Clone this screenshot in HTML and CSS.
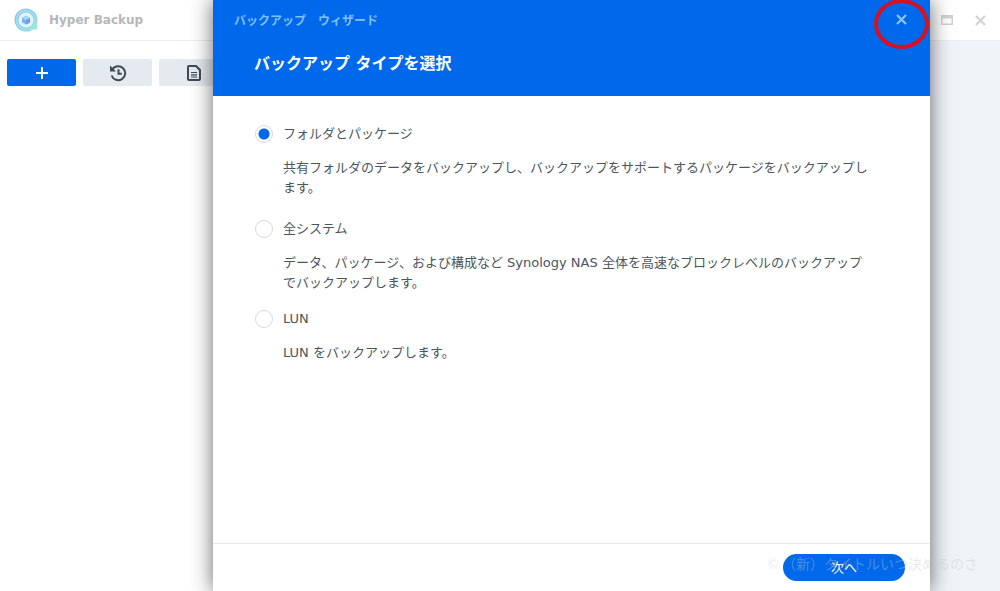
FILE: index.html
```html
<!DOCTYPE html>
<html lang="ja">
<head>
  <meta charset="UTF-8">
  <meta name="viewport" content="width=device-width, initial-scale=1.0">
  <title>Hyper Backup</title>
  <link rel="stylesheet" href="styles.css">
</head>
<body>

  <div class="app">
    <header class="app-header">
      <svg class="logo" viewBox="0 0 24 24" aria-hidden="true">
        <defs>
          <linearGradient id="ring" x1="0" y1="0" x2="1" y2="1">
            <stop offset="0" stop-color="#a3b8ea"/>
            <stop offset="0.5" stop-color="#92cdec"/>
            <stop offset="1" stop-color="#93e6cf"/>
          </linearGradient>
        </defs>
        <circle cx="12" cy="12" r="11.5" fill="url(#ring)"/>
        <circle cx="12" cy="12" r="9.5" fill="none" stroke="#9be6ea" stroke-width="1.4"/>
        <circle cx="12" cy="12" r="7.6" fill="#dff3fa"/>
        <path d="M17 18.5l6-3v6h-6z" fill="#9de8cf"/>
        <path d="M12 7.8l4 2.2v4.4l-4 2.2-4-2.2V10z" fill="#7eb2ee"/>
        <path d="M12 7.8l4 2.2-4 2.2L8 10z" fill="#a6d3f7"/>
        <path d="M12 12.2l4-2.2v4.4l-4 2.2z" fill="#6d9de6"/>
      </svg>
      <span class="app-name">Hyper Backup</span>
      <div class="window-controls">
        <button class="window-btn" aria-label="最大化">
          <svg width="12" height="10" viewBox="0 0 12 10"><path d="M0 0h12v10H0zM1.5 3.5v5h9v-5z" fill="#d0d2d4" fill-rule="evenodd"/></svg>
        </button>
        <button class="window-btn" aria-label="閉じる">
          <svg width="11" height="11" viewBox="0 0 11 11"><path d="M1 1l9 9M10 1l-9 9" stroke="#d0d2d4" stroke-width="2.2"/></svg>
        </button>
      </div>
    </header>

    <div class="app-body">
      <nav class="sidebar">
        <button class="tool tool-primary" aria-label="追加">
          <svg width="14" height="14" viewBox="0 0 14 14"><path d="M7 1v12M1 7h12" stroke="#fff" stroke-width="2"/></svg>
        </button>
        <button class="tool" aria-label="復元">
          <svg width="18" height="18" viewBox="0 0 18 18" fill="none" stroke="#414b55" stroke-width="2">
            <path d="M3.2 5.6A7 7 0 1 1 2.6 11.5"/>
            <path d="M9.5 5.3v4.4h3.3"/>
            <path d="M1 1.6v6h6z" fill="#414b55" stroke="none"/>
          </svg>
        </button>
        <button class="tool" aria-label="ログ">
          <svg width="16" height="18" viewBox="0 0 16 18" fill="none" stroke="#414b55">
            <path d="M3 2h7l4 4v9q0 1-1 1H3q-1 0-1-1V3q0-1 1-1z" stroke-width="2"/>
            <path d="M5 8.5h6M5 10.8h6M5 13h6" stroke-width="1.2"/>
          </svg>
        </button>
      </nav>
      <main class="content"></main>
    </div>
  </div>

  <form class="wizard" role="dialog" aria-labelledby="wizardTitle">
    <div class="wizard-header">
      <div class="wizard-bar">
        <span>バックアップ　ウィザード</span>
        <button type="button" class="close-btn" aria-label="ウィザードを閉じる">
          <svg width="11" height="11" viewBox="0 0 11 11"><path d="M1 1l9 9M10 1l-9 9" stroke="#8cc6ff" stroke-width="2.2"/></svg>
          <span class="marker"></span>
        </button>
      </div>
      <h1 id="wizardTitle">バックアップ タイプを選択</h1>
    </div>

    <div class="wizard-body">
      <div class="option">
        <input type="radio" name="type" id="typeFolder" checked>
        <label for="typeFolder">フォルダとパッケージ</label>
        <p>共有フォルダのデータをバックアップし、バックアップをサポートするパッケージをバックアップします。</p>
      </div>
      <div class="option">
        <input type="radio" name="type" id="typeSystem">
        <label for="typeSystem">全システム</label>
        <p>データ、パッケージ、および構成など Synology NAS 全体を高速なブロックレベルのバックアップでバックアップします。</p>
      </div>
      <div class="option">
        <input type="radio" name="type" id="typeLun">
        <label for="typeLun">LUN</label>
        <p>LUN をバックアップします。</p>
      </div>
    </div>

    <div class="wizard-footer">
      <button type="button" class="next-btn">次へ</button>
    </div>
  </form>

  <div class="watermark">© （新）タイトルいつ決めるのさ</div>

</body>
</html>
```

FILE: styles.css
```css
* {
  margin: 0;
  padding: 0;
  box-sizing: border-box;
}

body {
  font-family: "DejaVu Sans", "Noto Sans CJK JP", sans-serif;
  font-size: 13px;
  color: #4b555e;
  background: #fff;
  overflow: hidden;
}

button {
  border: none;
  background: none;
  font-family: inherit;
  cursor: pointer;
}

svg {
  display: block;
}

/* Application window */
.app {
  display: flex;
  flex-direction: column;
  height: 100vh;
}

.app-header {
  display: flex;
  align-items: center;
  height: 41px;
  padding: 0 10px 0 14px;
  border-bottom: 1px solid #ebedef;
}

.logo {
  width: 24px;
  height: 24px;
}

.app-name {
  margin-left: 11px;
  font-size: 12px;
  font-weight: bold;
  color: #b4b7ba;
}

.window-controls {
  display: flex;
  gap: 13px;
  margin-left: auto;
}

.window-btn {
  display: flex;
  align-items: center;
  justify-content: center;
  width: 20px;
  height: 20px;
}

.app-body {
  display: flex;
  flex: 1;
}

.sidebar {
  display: flex;
  align-items: flex-start;
  gap: 7px;
  width: 240px;
  padding: 18px 7px;
}

.content {
  flex: 1;
  background: #f0f4f9;
}

.tool {
  display: flex;
  flex: none;
  align-items: center;
  justify-content: center;
  width: 69px;
  height: 27px;
  border-radius: 2px;
  background: #e5eaf1;
}

.tool-primary {
  background: #0068eb;
}

/* Wizard dialog */
.wizard {
  position: absolute;
  top: 0;
  bottom: 0;
  left: 21.3%;
  right: 7%;
  display: flex;
  flex-direction: column;
  background: #fff;
  box-shadow: 0 0 20px rgba(0, 0, 0, 0.6);
}

.wizard-header {
  height: 96px;
  padding: 8px 18px 0 21px;
  background: #0068eb;
}

.wizard-bar {
  display: flex;
  align-items: center;
  justify-content: space-between;
  height: 22px;
  font-size: 12px;
  font-weight: bold;
  color: #7fc0ff;
}

.close-btn {
  position: relative;
  display: flex;
  align-items: center;
  justify-content: center;
  width: 22px;
  height: 22px;
}

.marker {
  position: absolute;
  top: -9px;
  left: -16px;
  width: 55px;
  height: 50px;
  border: 4px solid #d9101f;
  border-radius: 50%;
}

.wizard h1 {
  margin: 22px 0 0 20px;
  font-size: 16px;
  line-height: 24px;
  color: #fff;
}

.wizard-body {
  flex: 1;
  padding: 28px 42px;
}

.option {
  display: grid;
  grid-template-columns: 18px 1fr;
  column-gap: 10px;
  row-gap: 14px;
  align-items: center;
  margin-bottom: 21px;
  line-height: 20px;
}

.option + .option {
  margin-bottom: 16px;
}

.option input {
  appearance: none;
  width: 18px;
  height: 18px;
  border: 1px solid #d3dbe2;
  border-radius: 50%;
  background: #fff;
}

.option input:checked {
  background: radial-gradient(circle, #0068eb 5px, #fff 6px);
}

.option p {
  grid-column: 2;
  max-width: 590px;
}

.wizard-footer {
  display: flex;
  justify-content: flex-end;
  height: 48px;
  padding: 10px 25px;
  border-top: 1px solid #e6e8ea;
}

.next-btn {
  display: flex;
  align-items: center;
  justify-content: center;
  width: 122px;
  height: 27px;
  padding-bottom: 3px;
  border-radius: 14px;
  background: #0068eb;
  font-size: 13px;
  color: #fff;
}

.watermark {
  position: absolute;
  right: 22px;
  bottom: 16px;
  font-family: "Liberation Serif", "Noto Sans CJK JP", serif;
  font-size: 14px;
  line-height: 21px;
  color: rgba(190, 200, 212, 0.4);
  pointer-events: none;
}
```
